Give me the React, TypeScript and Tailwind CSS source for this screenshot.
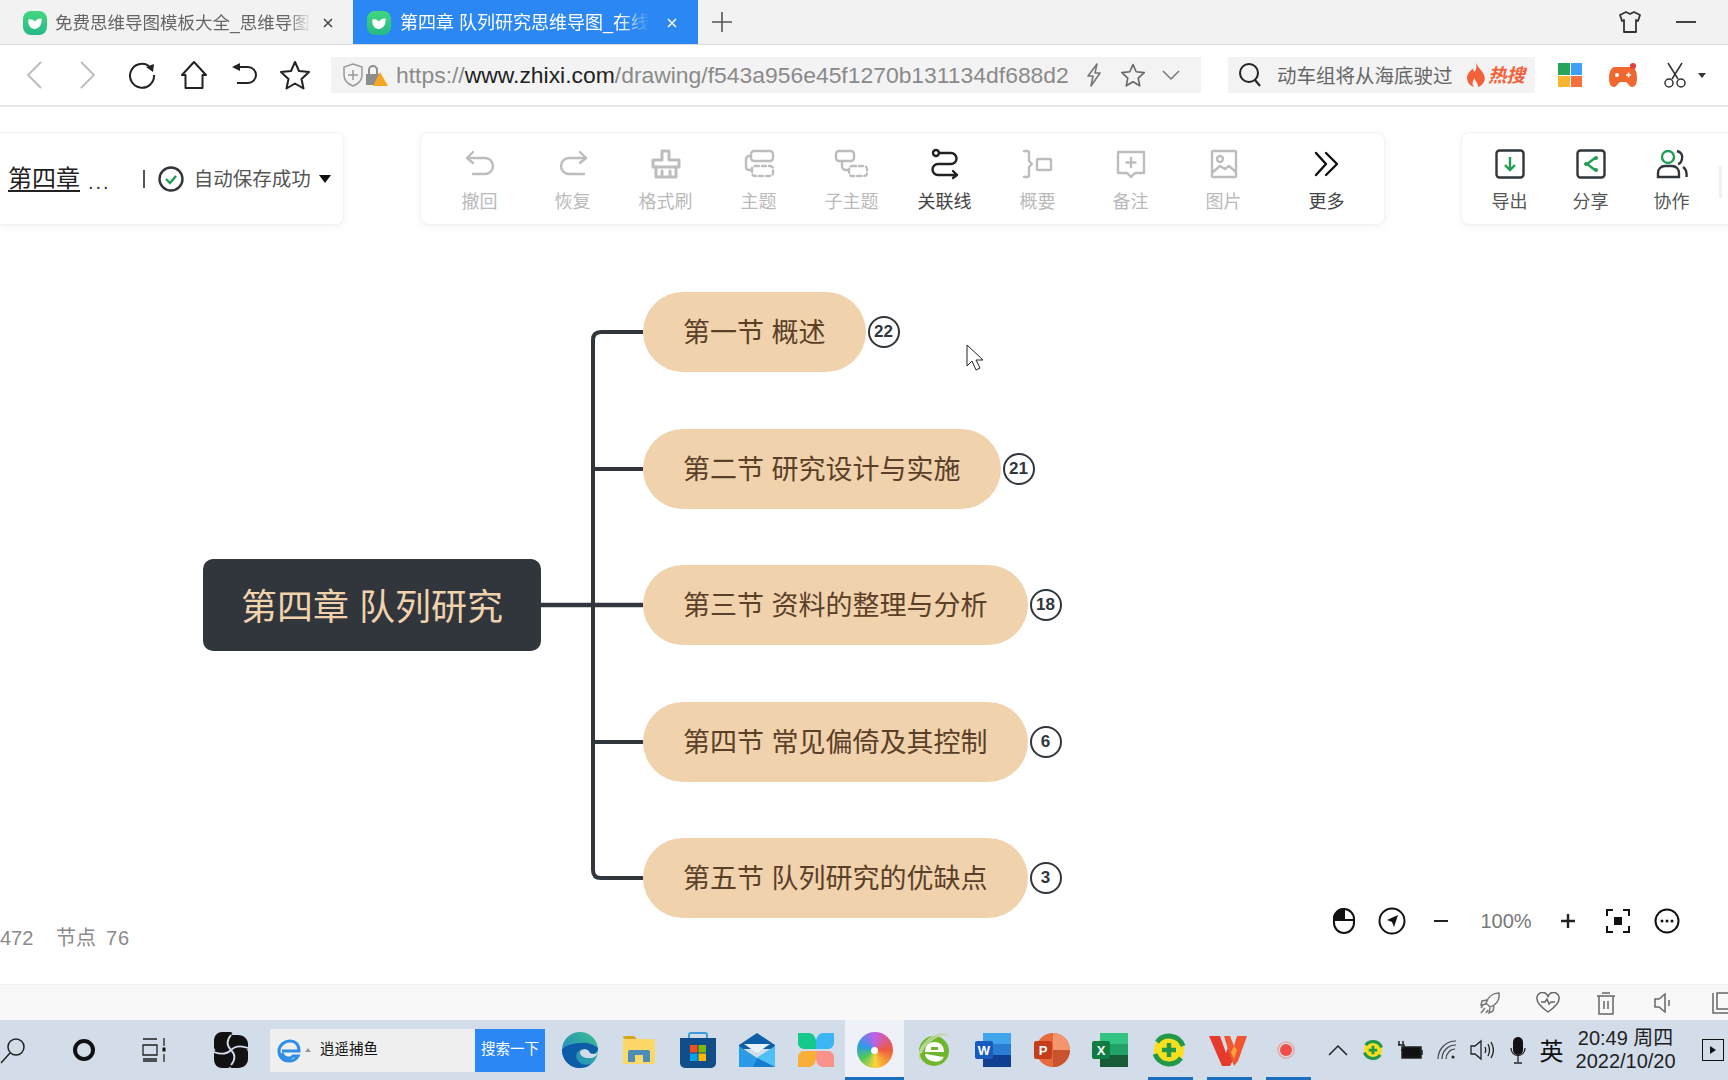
import React from "react";

const Logo = ({ id }: { id: string }) => (
  <svg width="24" height="24" viewBox="0 0 24 24" className="shrink-0">
    <defs>
      <linearGradient id={id} x1="0" y1="0" x2="0" y2="1">
        <stop offset="0" stopColor="#42d77d" />
        <stop offset="1" stopColor="#25b98a" />
      </linearGradient>
    </defs>
    <rect x="0" y="0" width="24" height="24" rx="8" fill={`url(#${id})`} />
    <path d="M5.500 8.500c2.500-.5 4.500 0 6.500 2 1-2 3.500-3.500 6.500-3 .5 5-1.500 10-6.500 10.500-5 0-7.500-5-6.500-9.500z" fill="#fff" />
  </svg>
);

const Close = ({ c }: { c: string }) => (
  <svg width="12" height="12" viewBox="0 0 12 12" fill="none" stroke={c} strokeWidth="1.500"><path d="M2 2l8 8M10 2l-8 8" /></svg>
);

const Gray = "#bdbdbd";
const Dark = "#222";

const Ti = ({ children, w = 32, h = 32 }: { children: React.ReactNode; w?: number; h?: number }) => (
  <svg width={w} height={h} viewBox={`0 0 ${w} ${h}`} fill="none" strokeWidth="2.400" strokeLinecap="round" strokeLinejoin="round">
    {children}
  </svg>
);

const tools = [
  { label: "撤回", on: false, icon: <Ti><g stroke={Gray}><path d="M9 4L3 10l6 5" /><path d="M3 10h18a8 8 0 0 1 0 16H9" /></g></Ti> },
  { label: "恢复", on: false, icon: <Ti><g stroke={Gray}><path d="M23 4l6 6-6 5" /><path d="M29 10H12a8 8 0 0 0 0 16h15" /></g></Ti> },
  { label: "格式刷", on: false, icon: <Ti><g stroke={Gray} strokeWidth="3"><path d="M12 3h7v9h10v7H3v-7h9z" /><path d="M6 19v10h20V19M12 23v6M20 23v6" /></g></Ti> },
  { label: "主题", on: false, icon: <Ti><g stroke={Gray}><rect x="8" y="3" width="22" height="10" rx="3" /><path d="M8 8H6a3 3 0 0 0-3 3v8a3 3 0 0 0 3 3h2" /><rect x="9" y="18" width="21" height="10" rx="3" strokeDasharray="4 3" /></g></Ti> },
  { label: "子主题", on: false, icon: <Ti w={36}><g stroke={Gray}><rect x="2" y="3" width="18" height="10" rx="3" /><path d="M8 13v5a4 4 0 0 0 4 4h2" /><rect x="15" y="18" width="18" height="10" rx="3" strokeDasharray="4 3" /></g></Ti> },
  { label: "关联线", on: true, icon: <Ti><g stroke={Dark}><circle cx="7" cy="5" r="3" /><path d="M10 5h12a5.500 5.500 0 0 1 0 11H9a5.500 5.500 0 0 0 0 11h19M24 23l4 4-4 3" /></g></Ti> },
  { label: "概要", on: false, icon: <Ti><g stroke={Gray}><path d="M2 3h3a2 2 0 0 1 2 2v8l3 3-3 3v8a2 2 0 0 1-2 2H2" /><rect x="15" y="11" width="14" height="11" rx="1" /></g></Ti> },
  { label: "备注", on: false, icon: <Ti><g stroke={Gray}><path d="M3 4h26v21H20l-4 4-4-4H3z" /><path d="M16 10v9M11.500 14.500h9" /></g></Ti> },
  { label: "图片", on: false, icon: <Ti><g stroke={Gray}><rect x="4" y="3" width="24" height="26" rx="1" /><circle cx="12" cy="11" r="3" /><path d="M5 24l7-6 5 3 4-3 7 6" /></g></Ti> },
];

const Mouse = () => (
  <svg width="24" height="28" viewBox="0 0 24 28" fill="none" stroke="#111" strokeWidth="2">
    <path d="M2 12a10 10 0 0 1 10-10v11H2z" fill="#111" />
    <rect x="2" y="2" width="20" height="24" rx="10" />
    <path d="M2 13h20" />
  </svg>
);

const nodes = [
  { t: "第一节 概述", n: "22", cls: "top-[185px]" },
  { t: "第二节 研究设计与实施", n: "21", cls: "top-[322px]" },
  { t: "第三节 资料的整理与分析", n: "18", cls: "top-[458px]" },
  { t: "第四节 常见偏倚及其控制", n: "6", cls: "top-[595px]" },
  { t: "第五节 队列研究的优缺点", n: "3", cls: "top-[731px]" },
];

const Edge = () => (
  <svg width="38" height="38" viewBox="0 0 38 38">
    <defs>
      <linearGradient id="eg" x1="0" y1="1" x2="1" y2="0"><stop offset="0" stopColor="#1b7fcc" /><stop offset="1" stopColor="#3ec08f" /></linearGradient>
    </defs>
    <circle cx="19" cy="19" r="18" fill="url(#eg)" />
    <path d="M1 19C1 27 7 36 17 37c5 0 10-1 13-4-6 2-11 0-13-3-3-4-2-9 2-11 4-2 9 0 9 4 3 1 9-1 9-6C33 14 27 11 20 12 9 12 2 16 1 19z" fill="#0d5ca8" />
    <path d="M19 21c1-3 6-4 9-1 0 2 2 3 5 3 2 0 3-1 4-2-1 4-4 6-9 6-5 0-9-2-9-6z" fill="#d3dde9" />
  </svg>
);

const Folder = () => (
  <svg width="34" height="30" viewBox="0 0 34 30">
    <path d="M1 3a2 2 0 0 1 2-2h9l3 3H3z" fill="#d9a520" />
    <rect x="1" y="4" width="32" height="25" rx="2" fill="#fbd867" />
    <path d="M6 27V17a2 2 0 0 1 2-2h18a2 2 0 0 1 2 2v10h-7v-7h-8v7z" fill="#4e8cb8" />
  </svg>
);

const Store = () => (
  <svg width="36" height="36" viewBox="0 0 36 36">
    <path d="M9 7V3a2 2 0 0 1 2-2h14a2 2 0 0 1 2 2v4" fill="none" stroke="#3d9ddb" strokeWidth="2" />
    <path d="M0 6h36v25a5 5 0 0 1-5 5H5a5 5 0 0 1-5-5z" fill="#114d88" />
    <rect x="10" y="13" width="7.500" height="7.500" fill="#f25022" />
    <rect x="18.500" y="13" width="7.500" height="7.500" fill="#7fba00" />
    <rect x="10" y="21.500" width="7.500" height="7.500" fill="#00a4ef" />
    <rect x="18.500" y="21.500" width="7.500" height="7.500" fill="#ffb900" />
  </svg>
);

const Mail = () => (
  <svg width="36" height="34" viewBox="0 0 36 34">
    <path d="M0 12L18 0l18 12v4H0z" fill="#0f5ea8" />
    <path d="M5 11h26L18 20z" fill="#eaf2fb" />
    <path d="M0 13l18 12 18-12v21H0z" fill="#2b9be8" />
    <path d="M18 25l18-12v21z" fill="#4fc0f5" />
    <path d="M18 25L36 34H14z" fill="#1a7ccf" />
  </svg>
);

const Flower = () => (
  <svg width="36" height="36" viewBox="0 0 36 36">
    <path d="M0 1h11c4 0 7 4 7 9v7H6c-3 0-6-3-6-6z" fill="#14c98a" />
    <path d="M36 1H25c-4 0-7 4-7 9v7h12c3 0 6-3 6-6z" fill="#3cb5f7" />
    <path d="M0 35h11c4 0 7-4 7-9v-7H6c-3 0-6 3-6 6z" fill="#f9ae37" />
    <path d="M36 35H25c-4 0-7-4-7-9v-7h12c3 0 6 3 6 6z" fill="#fb9289" />
  </svg>
);

const IeGreen = () => (
  <svg width="34" height="38" viewBox="0 0 34 38" fill="none">
    <circle cx="17" cy="20" r="15" fill="#6fb62c" />
    <path d="M9 20h17c0-5-4-8-8.500-8S9 15 9 20zm0 3c1 6 12 10 17 3" fill="#fff" stroke="#fff" strokeWidth="2" />
    <path d="M14 17.500h7" stroke="#6fb62c" strokeWidth="3" />
    <path d="M3 28C-1 18 14 0 31 4 24 2 8 10 4 22" stroke="#c3d9a4" strokeWidth="1.500" />
  </svg>
);

const Office = ({ a, b, c, d, letter }: { a: string; b: string; c: string; d: string; letter: string }) => (
  <svg width="36" height="34" viewBox="0 0 36 34">
    <rect x="8" y="0" width="28" height="34" rx="2" fill={b} />
    <rect x="8" y="0" width="28" height="11" fill={a} />
    <rect x="8" y="22" width="28" height="12" fill={c} />
    <rect x="0" y="8" width="18" height="18" rx="2" fill={d} />
    <text x="9" y="22" textAnchor="middle" fontSize="13" fontWeight="700" fill="#fff" fontFamily="Liberation Sans">{letter}</text>
  </svg>
);

const Ppt = () => (
  <svg width="36" height="34" viewBox="0 0 36 34">
    <circle cx="19" cy="17" r="17" fill="#e8693b" />
    <path d="M19 0a17 17 0 0 1 17 17H19z" fill="#f4956d" />
    <path d="M19 17h17a17 17 0 0 1-17 17z" fill="#c9532e" />
    <rect x="0" y="8" width="18" height="18" rx="2" fill="#c43e1c" />
    <text x="9" y="22" textAnchor="middle" fontSize="13" fontWeight="700" fill="#fff" fontFamily="Liberation Sans">P</text>
  </svg>
);

const Guard = ({ size }: { size: number }) => (
  <svg width={size} height={size} viewBox="0 0 36 36" fill="none">
    <circle cx="18" cy="18" r="15" fill="#f8e01e" />
    <path d="M6 10A15 15 0 0 1 32 14" stroke="#22984a" strokeWidth="5" />
    <path d="M30 26A15 15 0 0 1 4 22" stroke="#22984a" strokeWidth="5" />
    <path d="M18 11v14M11 18h14" stroke="#22984a" strokeWidth="4.500" />
  </svg>
);

const Wps = () => (
  <svg width="38" height="32" viewBox="0 0 38 32">
    <path d="M0 2h11l6 17 3-8 5 13-4 8h-8z" fill="#e63b2a" />
    <path d="M15 2h6l4 10 3-10h10l-9 25-4 5-5-13z" fill="#f0562f" />
    <path d="M19 11l6 14 3-9-3-4-3 6z" fill="#f9a13a" />
  </svg>
);

const Fan = () => (
  <svg width="34" height="36" viewBox="0 0 34 36" fill="none">
    <path d="M8 0h7c4 0 4 2 2 3h7c6 0 10 4 10 9v4c0 2-2 2-2 2 2 0 2 1 2 3v6c0 5-4 9-10 9h-6c-2 0-2-2-2-2 0 2-2 2-4 2H8c-5 0-8-4-8-9v-6c0-2 1-3 2-3-1 0-2-1-2-3V9c0-5 3-9 8-9z" fill="#111" />
    <path d="M17 18C13 14 12 9 17 3M17 18c4-4 9-5 17-2M17 18c4 4 5 9 0 15M17 18c-4 4-9 5-17 2" stroke="#d3dde9" strokeWidth="1.800" />
  </svg>
);

const apps = [
  { k: "edge", el: <Edge />, bar: false },
  { k: "folder", el: <Folder />, bar: false },
  { k: "store", el: <Store />, bar: false },
  { k: "mail", el: <Mail />, bar: false },
  { k: "flower", el: <Flower />, bar: false },
  { k: "swirl", el: <div className="w-[36px] h-[36px] rounded-full bg-[conic-gradient(#c15fe8,#ef5a3c_25%,#fbd33c_50%,#52c95a_65%,#2e9be8_80%,#c15fe8)] flex items-center justify-center"><div className="w-[7px] h-[7px] rounded-full bg-white" /></div>, bar: false, active: true },
  { k: "ie", el: <IeGreen />, bar: false },
  { k: "word", el: <Office a="#41a5ee" b="#2b7cd3" c="#103f91" d="#185abd" letter="W" />, bar: false },
  { k: "ppt", el: <Ppt />, bar: false },
  { k: "excel", el: <Office a="#33c481" b="#21a366" c="#185c37" d="#107c41" letter="X" />, bar: false },
  { k: "guard", el: <Guard size={36} />, bar: true },
  { k: "wps", el: <Wps />, bar: true },
  { k: "rec", el: <svg width="20" height="20" viewBox="0 0 20 20"><circle cx="9" cy="10" r="6" fill="#ef4f46" /><circle cx="9" cy="10" r="8" fill="none" stroke="#e8a8a4" strokeWidth="1.500" /></svg>, bar: true },
];

export default function App() {
  return (
    <div className="w-[1728px] h-[1080px] overflow-hidden flex flex-col bg-white [font-family:'Liberation_Sans','Noto_Sans_CJK_SC',sans-serif]">
      {/* Tabs */}
      <div className="h-[45px] shrink-0 bg-[#f2f2f2] border-b border-[#dcdcdc] flex items-stretch">
        <div className="w-[353px] flex items-center pl-[23px] pt-[2px]">
          <Logo id="lg1" />
          <div className="ml-[8px] w-[264px] shrink-0 whitespace-nowrap text-[17.500px] text-[#666] [mask-image:linear-gradient(to_right,black_88%,transparent_97%)]">免费思维导图模板大全_思维导图</div>
          <span className="ml-[3px]"><Close c="#444" /></span>
        </div>
        <div className="w-[345px] bg-[#2b87f3] flex items-center pl-[14px] pt-[2px]">
          <Logo id="lg2" />
          <div className="ml-[9px] w-[250px] shrink-0 whitespace-nowrap text-[18px] text-white [mask-image:linear-gradient(to_right,black_88%,transparent_100%)]">第四章 队列研究思维导图_在线</div>
          <span className="ml-[16px]"><Close c="#fff" /></span>
        </div>
        <div className="ml-[13px] flex items-center">
          <svg width="22" height="22" viewBox="0 0 22 22" stroke="#555" strokeWidth="1.600"><path d="M11 1v20M1 11h20" /></svg>
        </div>
        <div className="ml-auto flex items-center pr-[32px]">
          <svg width="22" height="24" viewBox="0 0 22 24" fill="none" stroke="#333" strokeWidth="1.800" strokeLinejoin="round"><path d="M7 2l4 2 4-2 6 3-2 6-2-1v12H5V10l-2 1-2-6z" /></svg>
          <div className="ml-[35px] w-[20px] h-[2px] bg-[#444]" />
        </div>
      </div>

      {/* Address bar */}
      <div className="h-[62px] shrink-0 border-b-[2px] border-[#e8e8e8] flex items-center pl-[7px]">
        <div className="w-[54px] flex justify-center"><svg width="18" height="30" viewBox="0 0 18 30" fill="none" stroke="#bbb" strokeWidth="1.800"><path d="M16 2L3 15l13 13" /></svg></div>
        <div className="w-[54px] flex justify-center"><svg width="18" height="30" viewBox="0 0 18 30" fill="none" stroke="#bbb" strokeWidth="1.800"><path d="M2 2l13 13L2 28" /></svg></div>
        <div className="w-[54px] flex justify-center"><svg width="28" height="28" viewBox="0 0 28 28" fill="none" stroke="#222" strokeWidth="2"><path d="M21 5a12 12 0 1 0 5 9" /><path d="M18 6l8-3-1 8z" fill="#222" stroke="none" /></svg></div>
        <div className="w-[49px] flex justify-center"><svg width="28" height="30" viewBox="0 0 28 30" fill="none" stroke="#222" strokeWidth="2" strokeLinejoin="round"><path d="M14 2L2 15h3.500v13h17V15H26z" /></svg></div>
        <div className="w-[52px] flex justify-center"><svg width="26" height="26" viewBox="0 0 26 26" fill="none" stroke="#222" strokeWidth="2"><path d="M8 5h9a8 8 0 0 1 0 16H6" /><path d="M1 5l8-4v8z" fill="#222" stroke="none" /></svg></div>
        <div className="w-[50px] flex justify-center"><svg width="30" height="30" viewBox="0 0 30 30" fill="none" stroke="#222" strokeWidth="2" strokeLinejoin="round"><path d="M15 2l4 9 10 1-7.500 7 2 9.500L15 23.500 6.500 28.500l2-9.500L1 12l10-1z" /></svg></div>
        <div className="ml-[11px] w-[870px] h-[36px] bg-[#f3f3f3] flex items-center pl-[11px]">
          <svg width="22" height="24" viewBox="0 0 22 24" fill="none" stroke="#999" strokeWidth="1.500"><path d="M11 1l9 3v8c0 6-4 9-9 11-5-2-9-5-9-11V4z" /><path d="M11 7v10M6 12h10" /></svg>
          <svg className="ml-[1px]" width="24" height="24" viewBox="0 0 24 24"><rect x="1" y="11" width="14" height="11" fill="#8d8d8d" /><path d="M4 11V7a4 4 0 0 1 8 0v4" fill="none" stroke="#8d8d8d" strokeWidth="2" /><path d="M15 9l8 14H8z" fill="#f5a623" /></svg>
          <div className="ml-[7px] w-[672px] shrink-0 whitespace-nowrap text-[22.900px] text-[#8a8a8a]">https://<span className="text-[#222]">www.zhixi.com</span>/drawing/f543a956e45f1270b131134df688d2</div>
          <svg className="ml-[16px]" width="18" height="26" viewBox="0 0 18 26" fill="none" stroke="#777" strokeWidth="1.600" strokeLinejoin="round"><path d="M13 2L4 14h5l-2 10 9-13h-5z" /></svg>
          <svg className="ml-[19px]" width="24" height="24" viewBox="0 0 30 30" fill="none" stroke="#666" strokeWidth="2" strokeLinejoin="round"><path d="M15 2l4 9 10 1-7.500 7 2 9.500L15 23.500 6.500 28.500l2-9.500L1 12l10-1z" /></svg>
          <svg className="ml-[17px]" width="18" height="12" viewBox="0 0 18 12" fill="none" stroke="#777" strokeWidth="1.500"><path d="M1 2l8 8 8-8" /></svg>
        </div>
        <div className="ml-[27px] w-[307px] h-[36px] bg-[#f3f3f3] flex items-center pl-[10px]">
          <svg width="24" height="26" viewBox="0 0 24 26" fill="none" stroke="#222" strokeWidth="2"><circle cx="11" cy="11" r="9" /><path d="M17 18l5 6" /></svg>
          <span className="ml-[15px] mt-[3px] w-[180px] text-[19.500px] text-[#666] whitespace-nowrap">动车组将从海底驶过</span>
          <svg className="ml-[9px] shrink-0" width="20" height="24" viewBox="0 0 18 22"><path d="M9 0c1 4 0 6-1 8-1-1-2-2-2-3C3 8 0 11 1 15c.5 4 3 6 6 7-2-3-1-6 1-8 0 3 3 4 3 8 3-1 6-4 6-8 0-5-5-8-8-14z" fill="#f4603a" /></svg>
          <span className="ml-[2px] mt-[1px] text-[18.500px] font-bold italic text-[#f4603a] whitespace-nowrap">热搜</span>
        </div>
        <div className="w-[70px] flex justify-center">
          <div className="grid grid-cols-2 gap-[1px] w-[24px] h-[24px]">
            <div className="bg-[#27a55c]" /><div className="bg-[#3d9ff5]" /><div className="bg-[#f9b532]" /><div className="bg-[#f4703c]" />
          </div>
        </div>
        <div className="w-[36px] flex justify-center">
          <svg width="30" height="26" viewBox="0 0 30 26"><path d="M7 5h16c4 0 6 5 6 11s-2 9-5 9-4-5-7-5h-4c-3 0-4 5-7 5s-5-3-5-9S3 5 7 5z" fill="#f0682f" /><circle cx="9" cy="13" r="2" fill="#fff" /><path d="M18 13h5M20.500 10.500v5" stroke="#fff" strokeWidth="1.500" /><circle cx="25" cy="4" r="3" fill="#e6403a" /></svg>
        </div>
        <div className="ml-[14px] w-[40px] flex justify-center">
          <svg width="24" height="26" viewBox="0 0 24 26" fill="none" stroke="#333" strokeWidth="1.500"><path d="M5 1l10 16M19 1L9 17" /><circle cx="6" cy="21" r="4" /><circle cx="18" cy="21" r="4" /></svg>
        </div>
        <span className="ml-[3px] w-0 h-0 border-l-[4px] border-r-[4px] border-t-[5px] border-l-transparent border-r-transparent border-t-[#333]" />
      </div>

      {/* Workspace */}
      <div className="relative flex-1 overflow-hidden">
        <div className="relative z-10 pt-[25px] flex items-stretch h-[118px]">
          <div className="w-[344px] h-[93px] shrink-0 bg-white rounded-r-[8px] border border-l-0 border-[#f3f3f3] shadow-[0_2px_8px_rgba(0,0,0,0.05)] flex items-center pl-[8px]">
            <span className="w-[80px] text-[24px] text-[#222] underline underline-offset-[3px] whitespace-nowrap">第四章 </span>
            <span className="text-[20px] text-[#333] tracking-[2px] leading-none mt-[6px]">...</span>
            <span className="ml-[32px] w-[2px] h-[18px] bg-[#555]" />
            <span className="ml-[13px] flex">
              <svg width="26" height="26" viewBox="0 0 26 26" fill="none"><circle cx="13" cy="13" r="11.500" stroke="#30363b" strokeWidth="2.400" /><path d="M8 13l4 4 6-7" stroke="#1e9e52" strokeWidth="2.400" /></svg>
            </span>
            <span className="ml-[10px] mt-[2px] text-[19.500px] text-[#555] whitespace-nowrap">自动保存成功</span>
            <span className="ml-[8px] flex"><span className="w-0 h-0 border-l-[6px] border-r-[6px] border-t-[8px] border-l-transparent border-r-transparent border-t-[#111]" /></span>
          </div>
          <div className="ml-[76px] w-[965px] h-[93px] shrink-0 bg-white rounded-[8px] border border-[#f3f3f3] shadow-[0_2px_8px_rgba(0,0,0,0.05)] flex pl-[12px]">
            {tools.map((t) => (
              <div key={t.label} className="w-[93px] flex flex-col items-center pt-[13px]">
                <div className="h-[36px] flex items-center">{t.icon}</div>
                <span className={`mt-[7px] text-[18px] leading-[26px] whitespace-nowrap ${t.on ? "text-[#444]" : "text-[#bababa]"}`}>{t.label}</span>
              </div>
            ))}
            <div className="w-[113px] flex flex-col items-center pt-[13px]">
              <div className="h-[36px] flex items-center">
                <Ti><g stroke="#111"><path d="M5 5l10 11L5 27M15 5l11 11-11 11" /></g></Ti>
              </div>
              <span className="mt-[7px] text-[18px] leading-[26px] text-[#444]">更多</span>
            </div>
          </div>
          <div className="ml-[76px] w-[280px] h-[93px] shrink-0 bg-white rounded-[8px] border border-[#f3f3f3] shadow-[0_2px_8px_rgba(0,0,0,0.05)] flex pl-[7px]">
            <div className="w-[81px] flex flex-col items-center pt-[13px]">
              <div className="h-[36px] flex items-center">
                <svg width="30" height="30" viewBox="0 0 30 30" fill="none" strokeWidth="2.400"><rect x="1.500" y="1.500" width="27" height="27" rx="3" stroke="#30363b" /><path d="M15 8v13M10 16l5 5 5-5" stroke="#1e9e52" /></svg>
              </div>
              <span className="mt-[7px] text-[18px] leading-[26px] text-[#555]">导出</span>
            </div>
            <div className="w-[81px] flex flex-col items-center pt-[13px]">
              <div className="h-[36px] flex items-center">
                <svg width="30" height="30" viewBox="0 0 30 30" fill="none" strokeWidth="2.400"><rect x="1.500" y="1.500" width="27" height="27" rx="3" stroke="#30363b" /><path d="M19 9l-8 6 8 6" stroke="#1e9e52" /><circle cx="10" cy="15" r="2" fill="#1e9e52" /><circle cx="20" cy="9" r="2" fill="#1e9e52" /><circle cx="20" cy="21" r="2" fill="#1e9e52" /></svg>
              </div>
              <span className="mt-[7px] text-[18px] leading-[26px] text-[#555]">分享</span>
            </div>
            <div className="w-[81px] flex flex-col items-center pt-[13px]">
              <div className="h-[36px] flex items-center">
                <svg width="32" height="30" viewBox="0 0 32 30" fill="none" strokeWidth="2.400"><circle cx="12" cy="8" r="6" stroke="#1e9e52" /><path d="M2 28v-4c0-4 3-7 7-7h7c4 0 7 3 7 7v4z" stroke="#30363b" /><path d="M21 2c4 1 6 4 5 8s-3 5-4 5" stroke="#30363b" /><path d="M27 18c3 2 4 5 3.500 10" stroke="#30363b" /></svg>
              </div>
              <span className="mt-[7px] text-[18px] leading-[26px] text-[#555]">协作</span>
            </div>
            <div className="ml-[7px] mt-[33px] w-[3px] h-[32px] bg-[#f1f1f1]" />
          </div>
        </div>

        {/* Mind map canvas */}
        <svg className="absolute inset-0 w-full h-full" fill="none" stroke="#30363b" strokeWidth="4" strokeLinejoin="round">
          <path d="M643 225H601Q593 225 593 233V763Q593 771 601 771H643" />
          <path d="M593 362H643M593 635H643" />
          <path d="M541 498H643" strokeWidth="4.500" />
        </svg>
        <div className="absolute left-[203px] top-[452px] w-[338px] h-[92px] rounded-[10px] bg-[#30363b] flex items-center justify-center pt-[6px] text-[36px] text-[#f0d2ad] whitespace-nowrap">第四章 队列研究</div>
        {nodes.map((n) => (
          <div key={n.n} className={`absolute left-[643px] ${n.cls} flex items-center gap-[2px]`}>
            <div className="h-[80px] rounded-[40px] bg-[#f0d2ad] px-[40px] pt-[3px] flex items-center text-[27px] text-[#5a4028] whitespace-nowrap">{n.t}</div>
            <div className="w-[32px] h-[32px] rounded-full border-2 border-[#30363b] bg-white flex items-center justify-center text-[17px] font-bold text-[#30363b]">{n.n}</div>
          </div>
        ))}
        <svg className="absolute left-[966px] top-[237px]" width="20" height="28" viewBox="0 0 20 28" fill="#fff" stroke="#222" strokeWidth="1"><path d="M1 1v21l5-5 4 9 4-2-4-8h7z" /></svg>

        <div className="absolute left-0 top-[816px] flex items-center text-[20px] text-[#8a8a8a] whitespace-nowrap">
          <span className="w-[56px]">472</span><span>节点</span><span className="ml-[10px] tracking-[1px]">76</span>
        </div>
        <div className="absolute left-[1320px] top-[794px] h-[40px] flex items-center">
          <div className="w-[48px] flex justify-center"><Mouse /></div>
          <div className="w-[48px] flex justify-center"><svg width="28" height="28" viewBox="0 0 28 28" fill="none"><circle cx="14" cy="14" r="12.500" stroke="#111" strokeWidth="2" /><path d="M20 8l-4 12-2-5-5-2z" fill="#111" /></svg></div>
          <div className="w-[50px] flex justify-center"><div className="w-[14px] h-[2.500px] bg-[#222]" /></div>
          <div className="w-[80px] text-center text-[20px] text-[#777]">100%</div>
          <div className="w-[44px] flex justify-center"><svg width="14" height="14" viewBox="0 0 14 14" stroke="#222" strokeWidth="2.400"><path d="M7 0v14M0 7h14" /></svg></div>
          <div className="w-[56px] flex justify-center"><svg width="24" height="24" viewBox="0 0 24 24" fill="none" stroke="#111" strokeWidth="2"><path d="M1 7V1h6M17 1h6v6M23 17v6h-6M7 23H1v-6" /><rect x="8" y="8" width="8" height="8" fill="#111" stroke="none" /></svg></div>
          <div className="w-[42px] flex justify-center"><svg width="26" height="26" viewBox="0 0 26 26" fill="none"><circle cx="13" cy="13" r="11.500" stroke="#111" strokeWidth="2" /><circle cx="8" cy="13" r="1.500" fill="#111" /><circle cx="13" cy="13" r="1.500" fill="#111" /><circle cx="18" cy="13" r="1.500" fill="#111" /></svg></div>
        </div>
      </div>

      {/* Browser status bar */}
      <div className="h-[36px] shrink-0 bg-[#f8f8f8] border-t border-[#f0f0f0] flex items-center pl-[1461px] overflow-hidden">
        <div className="w-[58px] shrink-0 flex justify-center"><svg width="22" height="24" viewBox="0 0 22 24" fill="none" stroke="#777" strokeWidth="1.500"><path d="M20 2c-6 0-11 4-13 10l4 4c6-2 10-6 9-14zM8 9l-5 1-1 4 5-1M15 15l-1 5-4 2 1-5M6 17l-4 5M9 19l-2 3M4 14l-2 3" /></svg></div>
        <div className="w-[58px] shrink-0 flex justify-center"><svg width="24" height="22" viewBox="0 0 24 22" fill="none" stroke="#666" strokeWidth="1.500"><path d="M12 20C5 15 1 11 1 7a5.500 5.500 0 0 1 11-2 5.500 5.500 0 0 1 11 2c0 4-4 8-11 13z" /><path d="M5 10h4l2-3 2 5 2-2h4" /></svg></div>
        <div className="w-[58px] shrink-0 flex justify-center"><svg width="20" height="24" viewBox="0 0 20 24" fill="none" stroke="#666" strokeWidth="1.500"><path d="M1 5h18M6 2h8M3 5v18h14V5M8 10v8M12 10v8" /></svg></div>
        <div className="w-[58px] shrink-0 flex justify-center"><svg width="20" height="22" viewBox="0 0 20 22" fill="none" stroke="#666" strokeWidth="1.500"><path d="M1 7v8h4l6 5V2L5 7zM15 8v6" /></svg></div>
        <div className="w-[58px] shrink-0 flex justify-center"><svg width="24" height="22" viewBox="0 0 24 22" fill="none" stroke="#666" strokeWidth="1.500"><path d="M3 1v20h20M7 1h16v16H7z" /></svg></div>
      </div>

      {/* Taskbar */}
      <div className="h-[60px] shrink-0 bg-[#d3dde9] flex items-center relative">
        <div className="w-[49px] h-full flex items-center"><svg width="26" height="30" viewBox="0 0 26 30" fill="none" stroke="#222" strokeWidth="1.500"><circle cx="16" cy="12" r="8" /><path d="M10 18L1 28" /></svg></div>
        <div className="w-[70px] h-full flex items-center justify-center"><div className="w-[22px] h-[22px] rounded-full border-[4px] border-[#111]" /></div>
        <div className="w-[72px] h-full flex items-center justify-center"><svg width="26" height="26" viewBox="0 0 26 26" fill="none" stroke="#222" strokeWidth="1.300"><path d="M1 2h14M1 24h14M1 8h14v10H1zM1 22h14M22 1v8M22 17v8" /><rect x="20.500" y="10.500" width="3" height="4" fill="#111" stroke="none" /></svg></div>
        <div className="w-[79px] h-full flex items-center justify-center"><Fan /></div>
        <div className="w-[205px] h-[43px] bg-[#efefef] flex items-center pl-[7px]">
          <svg width="24" height="26" viewBox="0 0 24 26" fill="none"><path d="M5 14h17c0-7-4-10-9-10S2 8 2 14s4 10 10 10c4 0 7-1 9-5h-5c-2 3-9 3-11-3" stroke="#2f8fe6" strokeWidth="3" /></svg>
          <span className="ml-[4px] w-0 h-0 border-l-[3px] border-r-[3px] border-b-[4px] border-l-transparent border-r-transparent border-b-[#999]" />
          <span className="ml-[9px] text-[14.500px] text-[#111] whitespace-nowrap">逍遥捕鱼</span>
        </div>
        <div className="w-[70px] h-[43px] bg-[#2b87f3] flex items-center justify-center text-[14.500px] text-white whitespace-nowrap">搜索一下</div>
        <div className="ml-[6px] flex h-full">
          {apps.map((a) => (
            <div key={a.k} className={`relative w-[58.900px] h-full flex items-center justify-center ${a.active ? "bg-[#eef2f8]" : ""}`}>
              {a.el}
              {a.active && <div className="absolute left-0 right-0 bottom-0 h-[3px] bg-[#1a6fbf]" />}
              {a.bar && <div className="absolute left-[8px] right-[6px] bottom-0 h-[3px] bg-[#1a6fbf]" />}
            </div>
          ))}
        </div>
        <div className="ml-[-3px] w-[48px] flex justify-center"><svg width="20" height="12" viewBox="0 0 20 12" fill="none" stroke="#222" strokeWidth="1.500"><path d="M1 11l9-9 9 9" /></svg></div>
        <div className="w-[22px] flex justify-center"><Guard size={24} /></div>
        <div className="w-[52px] flex justify-center"><svg width="26" height="20" viewBox="0 0 26 20" fill="none" stroke="#222" strokeWidth="1.500"><path d="M2 1v4M6 1v4M1 5h6v2c0 2-1 3-3 3" /><rect x="5" y="7" width="19" height="11" fill="#111" /><path d="M25 10v5" /></svg></div>
        <div className="w-[22px] flex justify-center"><svg width="20" height="20" viewBox="0 0 20 20" fill="none" stroke="#444" strokeWidth="1.200"><path d="M1 19C1 9 9 1 19 1M5 19C5 11 11 5 19 5M9 19c0-5 4-10 9-10" /><circle cx="16" cy="17" r="1.500" fill="#222" stroke="none" /></svg></div>
        <div className="w-[48px] flex justify-center"><svg width="24" height="22" viewBox="0 0 24 22" fill="none" stroke="#222" strokeWidth="1.300"><path d="M1 7v8h4l6 5V2L5 7zM15 8c1 2 1 4 0 6M18 5c2 4 2 8 0 12M21 3c3 5 3 11 0 16" /></svg></div>
        <div className="w-[24px] flex justify-center"><svg width="16" height="28" viewBox="0 0 16 28" fill="none"><rect x="3" y="1" width="10" height="18" rx="5" fill="#111" /><path d="M1 12c0 10 14 10 14 0M8 20v6M4 27h8" stroke="#222" strokeWidth="1.300" /></svg></div>
        <div className="w-[44px] text-center text-[24px] text-[#111] [font-family:'Noto_Sans_CJK_SC',sans-serif]">英</div>
        <div className="w-[104px] flex flex-col items-center text-[20px] leading-[23px] text-[#222] whitespace-nowrap">
          <span>20:49 周四</span>
          <span>2022/10/20</span>
        </div>
        <div className="w-[50px] flex justify-end pr-[4px]"><div className="w-[22px] h-[22px] border border-[#111] flex items-center justify-center"><span className="w-0 h-0 border-t-[4px] border-b-[4px] border-l-[6px] border-t-transparent border-b-transparent border-l-[#111]" /></div></div>
      </div>
    </div>
  );
}
